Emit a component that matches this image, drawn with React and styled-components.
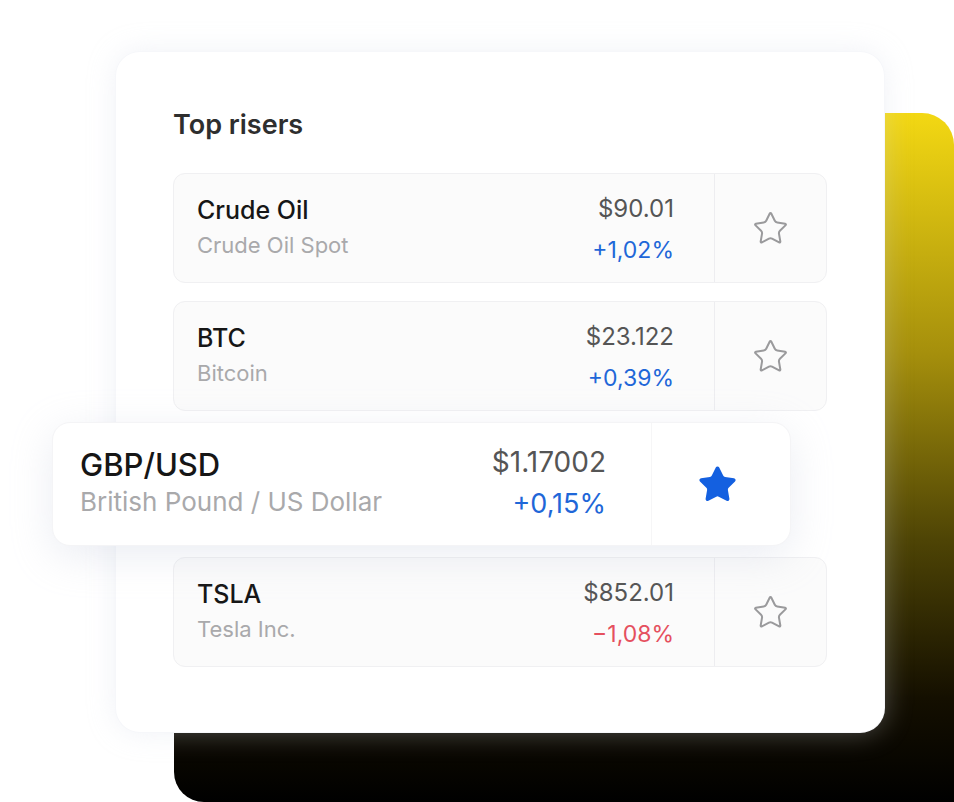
import styled, { createGlobalStyle } from 'styled-components';
import { Star } from 'lucide-react';

const GlobalStyle = createGlobalStyle`
  html, body {
    margin: 0;
    padding: 0;
    background: #ffffff;
  }
  body {
    font-family: Inter, "Noto Sans", sans-serif;
    -webkit-font-smoothing: antialiased;
  }
`;

const Stage = styled.div`
  display: grid;
  width: 954px;
  height: 802px;
  overflow: hidden;

  & > * {
    grid-area: 1 / 1;
  }
`;

const Backdrop = styled.div`
  margin: 113px 0 0 174px;
  width: 780px;
  height: 689px;
  border-radius: 0 32px 0 30px;
  background: linear-gradient(180deg, #f3d813 0%, #a58f0c 35%, #4e4405 62%, #140f00 85%, #000000 100%);
`;

const Card = styled.section`
  margin: 52px 0 0 116px;
  width: 768px;
  height: 680px;
  box-sizing: border-box;
  padding: 57px 57px 0;
  background: #ffffff;
  border-radius: 24px;
  box-shadow: 0 0 0 1px #f6f7fa, 0 0 28px rgba(210, 214, 228, 0.35);
`;

const Title = styled.h2`
  margin: 0 0 33px;
  font-size: 27px;
  line-height: 31px;
  font-weight: 600;
  color: #2e2e2e;
`;

const List = styled.div`
  display: flex;
  flex-direction: column;
  gap: 18px;
`;

const Row = styled.div`
  display: flex;
  height: ${(p) => (p.$lifted ? '124px' : '110px')};
  margin: ${(p) => (p.$lifted ? '-7px 36px -7px -121px' : '0')};
  box-sizing: border-box;
  background: ${(p) => (p.$lifted ? '#ffffff' : '#fbfbfb')};
  border: 1px solid ${(p) => (p.$lifted ? '#f4f4f6' : '#f0f0f2')};
  border-radius: ${(p) => (p.$lifted ? '18px' : '12px')};
  box-shadow: ${(p) => (p.$lifted ? '0 10px 40px rgba(190, 196, 214, 0.3)' : 'none')};
  position: relative;
  z-index: ${(p) => (p.$lifted ? 2 : 1)};
`;

const Info = styled.div`
  flex: 1;
  display: flex;
  justify-content: space-between;
  align-items: center;
  padding: ${(p) => (p.$lifted ? '0 45px 0 27px' : '0 40px 0 23px')};
`;

const Column = styled.div`
  display: flex;
  flex-direction: column;
  align-items: ${(p) => (p.$right ? 'flex-end' : 'flex-start')};
  gap: ${(p) => p.$gap}px;
  margin: ${(p) => p.$shift || 0}px 0 0;
`;

const Name = styled.div`
  font-size: ${(p) => (p.$lifted ? '31px' : '25px')};
  line-height: 1.2;
  font-weight: 500;
  color: #161616;
`;

const Sub = styled.div`
  font-size: ${(p) => (p.$lifted ? '26px' : '22px')};
  line-height: 1.2;
  color: #a9a9ab;
`;

const Price = styled.div`
  font-size: ${(p) => (p.$lifted ? '28px' : '24px')};
  line-height: 1.2;
  color: #555555;
`;

const Change = styled.div`
  font-size: ${(p) => (p.$lifted ? '27px' : '23px')};
  line-height: 1.2;
  color: ${(p) => (p.$down ? '#e5505e' : '#1f67d8')};
`;

const StarCell = styled.div`
  box-sizing: border-box;
  flex: none;
  width: ${(p) => (p.$lifted ? '139px' : '112px')};
  display: flex;
  align-items: center;
  justify-content: center;
  border-left: 1px solid ${(p) => (p.$lifted ? '#f6f6f7' : '#ededf0')};
  color: ${(p) => (p.$active ? '#1460e0' : '#9a9a9c')};
  padding-right: ${(p) => (p.$lifted ? '8px' : '0')};
`;

const assets = [
  { name: 'Crude Oil', sub: 'Crude Oil Spot', price: '$90.01', change: '+1,02%' },
  { name: 'BTC', sub: 'Bitcoin', price: '$23.122', change: '+0,39%' },
  { name: 'GBP/USD', sub: 'British Pound / US Dollar', price: '$1.17002', change: '+0,15%', lifted: true, fav: true },
  { name: 'TSLA', sub: 'Tesla Inc.', price: '$852.01', change: '−1,08%', down: true },
];

export default function App() {
  return (
    <>
      <GlobalStyle />
      <Stage>
        <Backdrop />
        <Card>
          <Title>Top risers</Title>
          <List>
            {assets.map((a) => (
              <Row key={a.name} $lifted={a.lifted}>
                <Info $lifted={a.lifted}>
                  <Column $gap={a.lifted ? 3 : 7} $shift={a.lifted ? -5 : -3}>
                    <Name $lifted={a.lifted}>{a.name}</Name>
                    <Sub $lifted={a.lifted}>{a.sub}</Sub>
                  </Column>
                  <Column $right $gap={a.lifted ? 8 : 13} $shift={a.lifted ? -2 : 3}>
                    <Price $lifted={a.lifted}>{a.price}</Price>
                    <Change $lifted={a.lifted} $down={a.down}>{a.change}</Change>
                  </Column>
                </Info>
                <StarCell $lifted={a.lifted} $active={a.fav}>
                  {a.fav
                    ? <Star size={41} fill="currentColor" strokeWidth={1.2} />
                    : <Star size={37} strokeWidth={1.3} />}
                </StarCell>
              </Row>
            ))}
          </List>
        </Card>
      </Stage>
    </>
  );
}
